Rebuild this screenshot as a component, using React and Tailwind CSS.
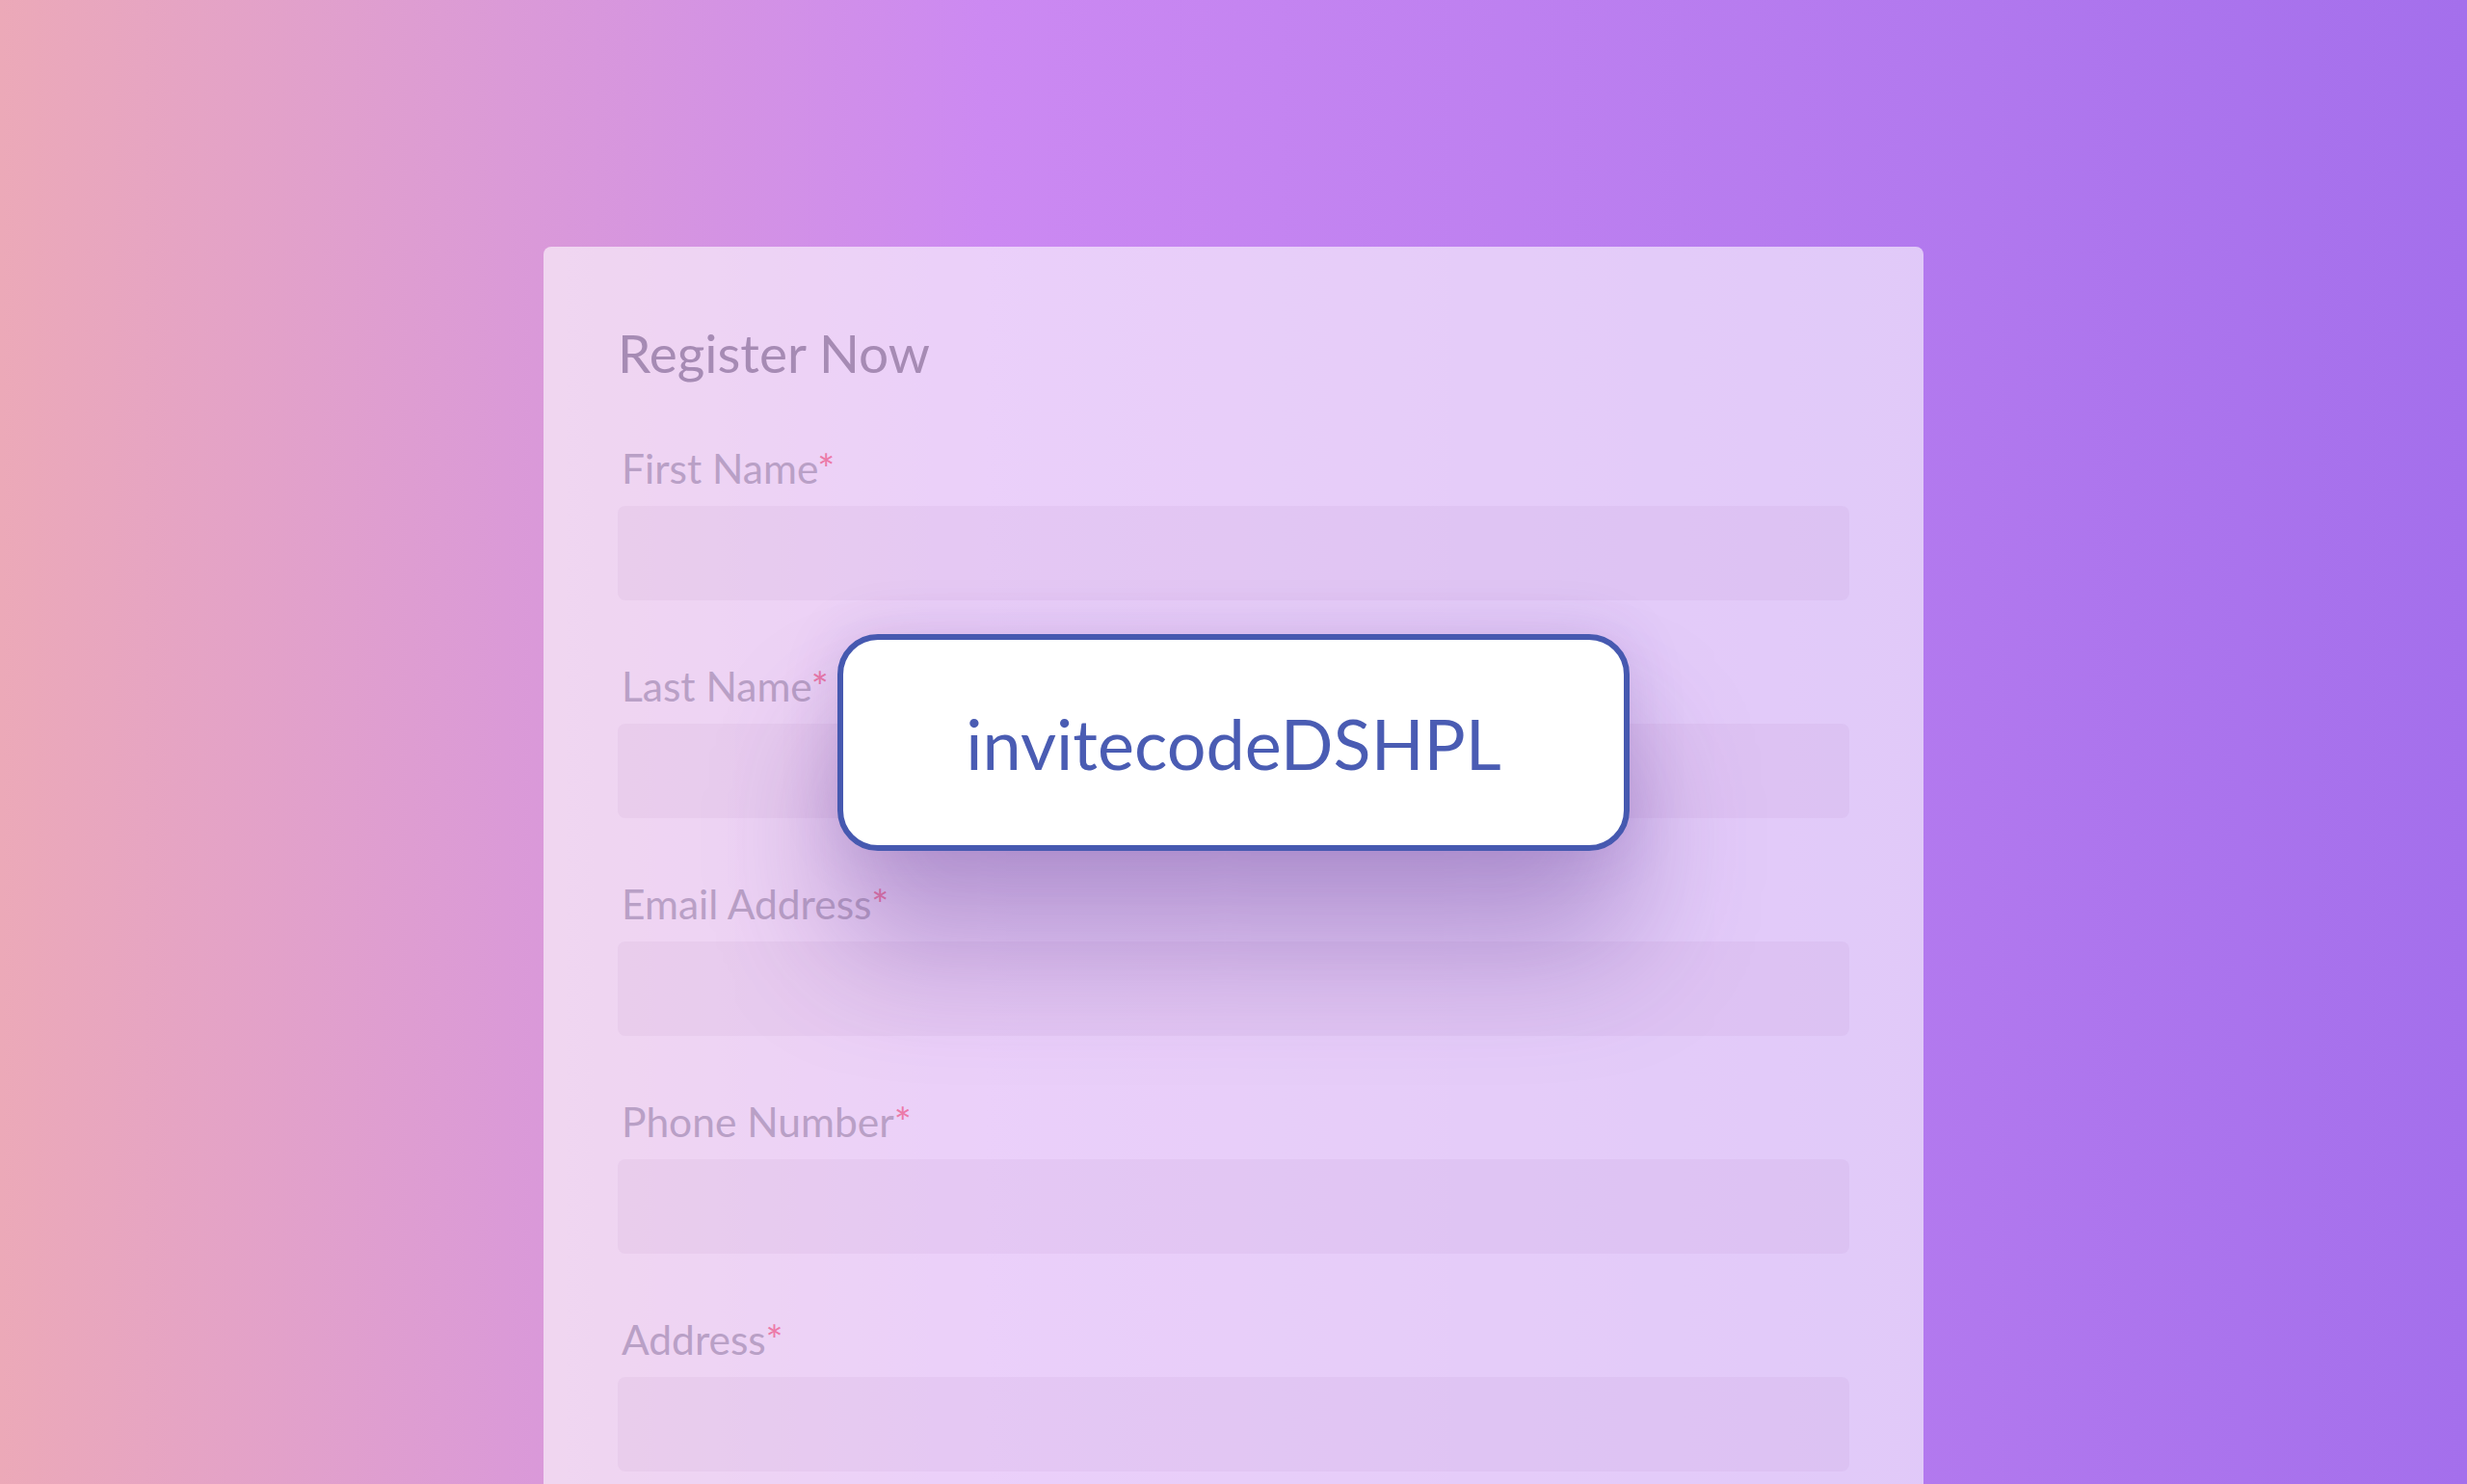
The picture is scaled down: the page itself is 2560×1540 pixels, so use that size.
import React from "react";

const fields = ["First Name", "Last Name", "Email Address", "Phone Number", "Address"];

const Field = ({ label }) => (
  <div className="flex flex-col">
    <label className="text-[42.5px] leading-[48px] text-[#b9a0c6] pl-[4px]">
      {label}
      <span className="text-[#ec7aa8]">*</span>
    </label>
    <div className="mt-[15px] h-[98px] w-full rounded-lg bg-[#9a60b0]/[0.07]" />
  </div>
);

const App = () => {
  return (
    <div
      className="relative w-[2560px] h-[1540px] overflow-hidden bg-gradient-to-r from-[#eca9b8] via-[#cc89f2] via-40% to-[#a46fec]"
      style={{ fontFamily: "Lato, 'Open Sans', sans-serif" }}
    >
      {/* Form card */}
      <div className="mx-auto mt-[256px] w-[1432px] h-[1284px] rounded-t-lg bg-white/60 px-[77px] pt-[78px]">
        <h1 className="text-[55px] leading-[64px] text-[#a68bb4]">Register Now</h1>
        <div className="mt-[64px] flex flex-col gap-[65px]">
          {fields.map((f) => (
            <Field key={f} label={f} />
          ))}
        </div>
      </div>

      {/* Invite code popup */}
      <div className="absolute left-[869px] top-[658px] w-[822px] h-[225px] flex items-center justify-center rounded-[42px] border-[6px] border-[#4659b0] bg-white shadow-[0_100px_130px_rgba(90,50,140,0.36),0_0_60px_rgba(90,50,140,0.16)]">
        <span className="text-[72px] text-[#4a5cb3]">invitecodeDSHPL</span>
      </div>
    </div>
  );
};

export default App;
